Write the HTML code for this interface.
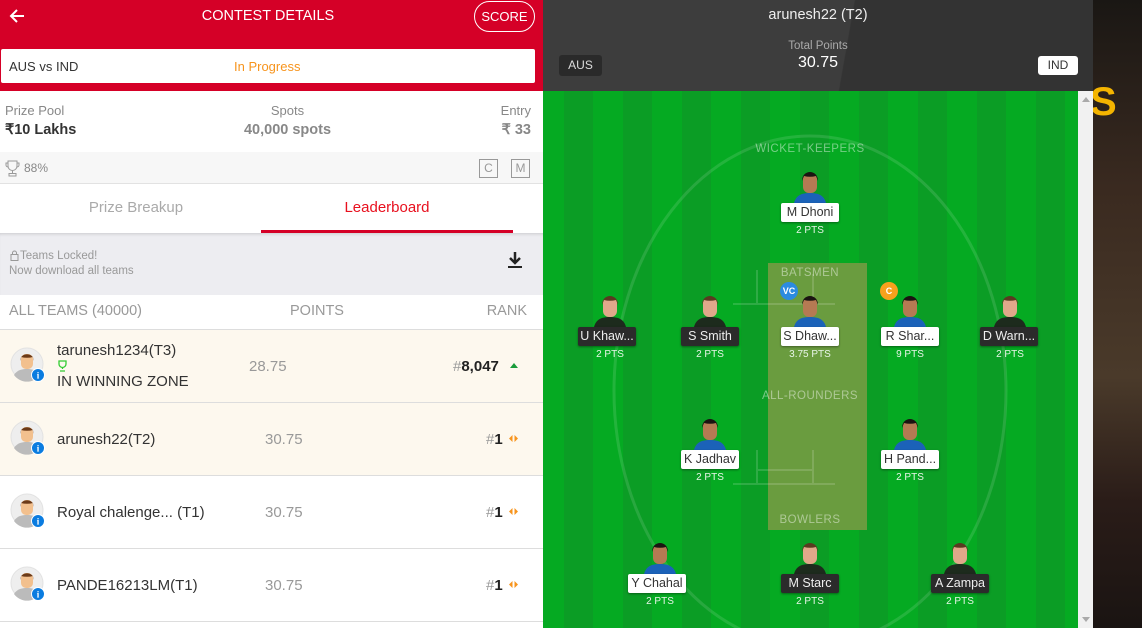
<!DOCTYPE html>
<html><head><meta charset="utf-8"><style>
*{margin:0;padding:0;box-sizing:border-box}
body{width:1142px;height:628px;overflow:hidden;font-family:"Liberation Sans",sans-serif;background:#1c1a17;position:relative}
.a{position:absolute}
#left{left:0;top:0;width:543px;height:628px;background:#fff}
.hdr{left:0;top:0;width:543px;height:91px;background:#d50027}
.t{white-space:nowrap}
.row{left:0;width:543px;height:73px;border-bottom:1px solid #ddd}
.lbl{position:absolute;height:19px;width:58px;font-size:12.5px;line-height:19px;text-align:center;border-radius:2px;box-shadow:0 1px 2px rgba(0,0,0,.4);overflow:hidden}
.w{background:#fff;color:#333}.d{background:#2b2b2b;color:#eee}
.pts{position:absolute;font-size:10px;color:#e8f5e8;width:60px;text-align:center}
.sec{position:absolute;font-size:11.5px;color:rgba(255,255,255,.45);letter-spacing:.5px;width:160px;text-align:center}
</style></head><body>
<div id="left" class="a">
<div class="a hdr"></div>
<svg class="a" style="left:8px;top:7px" width="18" height="18" viewBox="0 0 18 18"><path d="M16 9H3M9 3L3 9l6 6" stroke="#fff" stroke-width="2" fill="none"/></svg>
<div class="a t" style="left:0;width:536px;top:8px;text-align:center;color:#fff;font-size:14.5px">CONTEST DETAILS</div>
<div class="a" style="left:474px;top:1px;width:61px;height:31px;border:1px solid #fff;border-radius:16px;color:#fff;font-size:13px;text-align:center;line-height:29px">SCORE</div>
<div class="a" style="left:1px;top:49px;width:534px;height:34px;background:#fff;border-radius:2px"></div>
<div class="a t" style="left:9px;top:59px;font-size:13px;color:#333">AUS vs IND</div>
<div class="a t" style="left:234px;top:59px;font-size:13px;color:#f7941d">In Progress</div>
<div class="a t" style="left:5px;top:103px;font-size:13px;color:#888">Prize Pool</div>
<div class="a t" style="left:5px;top:122px;font-size:14.5px;color:#333;font-weight:bold">₹10 Lakhs</div>
<div class="a t" style="left:0;width:575px;text-align:center;top:103px;font-size:13px;color:#888">Spots</div>
<div class="a t" style="left:0;width:575px;text-align:center;top:122px;font-size:14.5px;color:#888;font-weight:bold">40,000 spots</div>
<div class="a t" style="right:12px;top:103px;font-size:13px;color:#888">Entry</div>
<div class="a t" style="right:12px;top:122px;font-size:14.5px;color:#888;font-weight:bold">₹ 33</div>
<div class="a" style="left:0;top:152px;width:543px;height:32px;background:#f7f7f7;border-bottom:1px solid #e2e2e2"></div>
<svg class="a" style="left:5px;top:160px" width="15" height="17" viewBox="0 0 15 17"><path d="M3 1h9v5a4.5 4.5 0 0 1-9 0zM3 3H1v2a2 2 0 0 0 2 2M12 3h2v2a2 2 0 0 1-2 2M7.5 10.5v3M4 16h7v-2.5H4z" stroke="#999" fill="none"/></svg>
<div class="a t" style="left:24px;top:161px;font-size:12px;color:#888">88%</div>
<div class="a" style="left:479px;top:159px;width:19px;height:19px;border:1px solid #999;color:#999;font-size:12px;text-align:center;line-height:17px">C</div>
<div class="a" style="left:511px;top:159px;width:19px;height:19px;border:1px solid #999;color:#999;font-size:12px;text-align:center;line-height:17px">M</div>
<div class="a t" style="left:0;width:272px;text-align:center;top:199px;font-size:15px;color:#aaa">Prize Breakup</div>
<div class="a t" style="left:261px;width:252px;text-align:center;top:199px;font-size:15px;color:#e8101e">Leaderboard</div>
<div class="a" style="left:261px;top:230px;width:252px;height:3px;background:#d50027"></div>
<div class="a" style="left:0;top:233px;width:543px;height:62px;background:#ededf1;box-shadow:inset 0 3px 3px -2px rgba(0,0,0,.15)"></div>
<svg class="a" style="left:10px;top:250px" width="9" height="11" viewBox="0 0 9 11"><rect x="1" y="4.5" width="7" height="6" fill="none" stroke="#999"/><path d="M2.5 4.5V3a2 2 0 0 1 4 0v1.5" fill="none" stroke="#999"/></svg>
<div class="a t" style="left:20px;top:250px;font-size:11.5px;color:#999">Teams Locked!</div>
<div class="a t" style="left:9px;top:265px;font-size:11.5px;color:#999">Now download all teams</div>
<svg class="a" style="left:507px;top:251px" width="16" height="18" viewBox="0 0 16 18"><path d="M8 1v10M3 7l5 5 5-5" stroke="#222" stroke-width="2.5" fill="none"/><path d="M1 16h14" stroke="#222" stroke-width="2"/></svg>
<div class="a t" style="left:9px;top:303px;font-size:14.5px;color:#999">ALL TEAMS (40000)</div>
<div class="a t" style="left:290px;top:303px;font-size:14.5px;color:#999">POINTS</div>
<div class="a t" style="right:16px;top:303px;font-size:14.5px;color:#999">RANK</div>
<div class="a" style="left:0;top:329px;width:543px;height:1px;background:#ddd"></div>

<div class="a row" style="top:330px;background:#fdf8ee"></div>
<div class="a row" style="top:403px;background:#fdf8ee"></div>
<div class="a row" style="top:476px;background:#fff"></div>
<div class="a row" style="top:549px;background:#fff"></div>

<svg width="0" height="0" style="position:absolute"><defs><g id="av"><circle cx="17" cy="17" r="16" fill="#eee" stroke="#e2e2e2"/><path d="M4 28c3-5 8-6 13-6s10 1 13 6a16 16 0 0 1-26 0z" fill="#bbb"/><rect x="11" y="7" width="12" height="15" rx="5" fill="#f2c08e"/><path d="M10 14c0-9 14-9 14 0l-1-4c-4 1-8 1-12 0z" fill="#6b3a18"/><circle cx="28" cy="28" r="6.5" fill="#0a7ce0" stroke="#fff"/><text x="28" y="31.5" font-size="9" fill="#fff" text-anchor="middle" font-weight="bold" font-family="Liberation Serif">i</text></g>
<g id="ar"><path d="M0 3.5L3.5 0v7zM5.5 0L9 3.5 5.5 7z" fill="#f7941d"/></g></defs></svg>
<svg class="a" style="left:10px;top:347px" width="36" height="36"><use href="#av"/></svg>
<svg class="a" style="left:10px;top:420px" width="36" height="36"><use href="#av"/></svg>
<svg class="a" style="left:10px;top:493px" width="36" height="36"><use href="#av"/></svg>
<svg class="a" style="left:10px;top:566px" width="36" height="36"><use href="#av"/></svg>

<div class="a t" style="left:57px;top:342px;font-size:15px;color:#333">tarunesh1234(T3)</div>
<svg class="a" style="left:57px;top:360px" width="11" height="12" viewBox="0 0 11 12"><path d="M2 1h7v3a3.5 3.5 0 0 1-7 0zM5.5 7v2M3 11h5" stroke="#3c3" fill="none" stroke-width="1.3"/></svg>
<div class="a t" style="left:57px;top:373px;font-size:15px;color:#333">IN WINNING ZONE</div>
<div class="a t" style="left:249px;top:358px;font-size:15px;color:#999">28.75</div>
<div class="a t" style="left:453px;top:358px;font-size:15px;color:#999">#<b style="color:#222">8,047</b></div>
<div class="a" style="left:510px;top:363px;border:4px solid transparent;border-bottom:5px solid #1a9c3a;border-top:0"></div>

<div class="a t" style="left:57px;top:431px;font-size:15px;color:#333">arunesh22(T2)</div>
<div class="a t" style="left:265px;top:431px;font-size:15px;color:#999">30.75</div>
<div class="a t" style="left:486px;top:431px;font-size:15px;color:#999">#<b style="color:#222">1</b></div>
<svg class="a" style="left:509px;top:435px" width="9" height="7"><use href="#ar"/></svg>

<div class="a t" style="left:57px;top:504px;font-size:15px;color:#333">Royal chalenge... (T1)</div>
<div class="a t" style="left:265px;top:504px;font-size:15px;color:#999">30.75</div>
<div class="a t" style="left:486px;top:504px;font-size:15px;color:#999">#<b style="color:#222">1</b></div>
<svg class="a" style="left:509px;top:508px" width="9" height="7"><use href="#ar"/></svg>

<div class="a t" style="left:57px;top:577px;font-size:15px;color:#333">PANDE16213LM(T1)</div>
<div class="a t" style="left:265px;top:577px;font-size:15px;color:#999">30.75</div>
<div class="a t" style="left:486px;top:577px;font-size:15px;color:#999">#<b style="color:#222">1</b></div>
<svg class="a" style="left:509px;top:581px" width="9" height="7"><use href="#ar"/></svg>
</div>

<div class="a" style="left:1093px;top:0;width:49px;height:628px;background:linear-gradient(180deg,#1a1714 0%,#3a2a20 30%,#4a3a2a 60%,#2a1c18 80%,#1a1412 100%)"></div>
<div class="a t" style="left:1090px;top:80px;font-size:40px;color:#f4b400;font-weight:bold">S</div>
<div class="a" style="left:543px;top:0;width:550px;height:91px;background:linear-gradient(100deg,#3d3d3d 0%,#3d3d3d 55%,#333 55.2%,#333 100%)"></div>
<div class="a t" style="left:543px;width:550px;text-align:center;top:7px;font-size:14.5px;color:#eee">arunesh22 (T2)</div>
<div class="a t" style="left:543px;width:550px;text-align:center;top:40px;font-size:11.5px;color:#aaa">Total Points</div>
<div class="a t" style="left:543px;width:550px;text-align:center;top:54px;font-size:16px;color:#fff">30.75</div>
<div class="a" style="left:559px;top:55px;width:43px;height:21px;background:#2a2a2a;border-radius:3px;color:#ddd;font-size:12px;text-align:center;line-height:21px">AUS</div>
<div class="a" style="left:1038px;top:56px;width:40px;height:19px;background:#fff;border-radius:3px;color:#333;font-size:12px;text-align:center;line-height:19px">IND</div>
<div class="a" style="left:543px;top:91px;width:535px;height:537px;background-color:#05aa22;background-image:linear-gradient(90deg,#0b9d25 0,#0b9d25 29px,#05aa22 29px,#05aa22 59px);background-size:59px 100%;background-position:21px 0"></div>
<div class="a" style="left:1078px;top:91px;width:15px;height:537px;background:#f1f1f1"></div>
<div class="a" style="left:1082px;top:97px;border:4px solid transparent;border-bottom:5px solid #aaa;border-top:0"></div>
<div class="a" style="left:1082px;top:617px;border:4px solid transparent;border-top:5px solid #aaa;border-bottom:0"></div>
<svg class="a" style="left:543px;top:91px" width="535" height="537"><ellipse cx="267" cy="300" rx="196" ry="255" fill="none" stroke="rgba(255,255,255,.12)" stroke-width="3"/></svg>
<div class="a" style="left:768px;top:263px;width:99px;height:267px;background:#6a9c3f"></div>
<svg class="a" style="left:733px;top:270px" width="175" height="250"><g stroke="rgba(255,255,255,.15)" stroke-width="2" fill="none"><path d="M0 34h102M24 34V0M80 34V4M0 214h102M24 214v-34M80 214v-34M24 200h56"/></g></svg>
<div class="sec" style="left:730px;top:143px">WICKET-KEEPERS</div>
<div class="sec" style="left:730px;top:267px">BATSMEN</div>
<div class="sec" style="left:730px;top:390px">ALL-ROUNDERS</div>
<div class="sec" style="left:730px;top:514px">BOWLERS</div>

<svg width="0" height="0" style="position:absolute"><defs><g id="pl"><path d="M2 36c2-8 8-10 16-10s14 2 16 10z" fill="#1b62b8"/><rect x="11" y="6" width="14" height="20" rx="6" fill="#b57a53"/><path d="M10 14c0-12 16-12 16 0l-2-5c-4 1-8 1-12 0z" fill="#1a1411"/></g><g id="pa"><path d="M2 36c2-8 8-10 16-10s14 2 16 10z" fill="#1d2b1d"/><rect x="11" y="6" width="14" height="20" rx="6" fill="#e0a88a"/><path d="M10 14c0-12 16-12 16 0l-2-5c-4 1-8 1-12 0z" fill="#5a3a20"/></g></defs></svg>
<svg class="a" style="left:792px;top:167px" width="36" height="36"><use href="#pl"/></svg>
<svg class="a" style="left:592px;top:291px" width="36" height="36"><use href="#pa"/></svg>
<svg class="a" style="left:692px;top:291px" width="36" height="36"><use href="#pa"/></svg>
<svg class="a" style="left:792px;top:291px" width="36" height="36"><use href="#pl"/></svg>
<svg class="a" style="left:892px;top:291px" width="36" height="36"><use href="#pl"/></svg>
<svg class="a" style="left:992px;top:291px" width="36" height="36"><use href="#pa"/></svg>
<svg class="a" style="left:692px;top:414px" width="36" height="36"><use href="#pl"/></svg>
<svg class="a" style="left:892px;top:414px" width="36" height="36"><use href="#pl"/></svg>
<svg class="a" style="left:642px;top:538px" width="36" height="36"><use href="#pl"/></svg>
<svg class="a" style="left:792px;top:538px" width="36" height="36"><use href="#pa"/></svg>
<svg class="a" style="left:942px;top:538px" width="36" height="36"><use href="#pa"/></svg>
<div class="a" style="left:780px;top:282px;width:18px;height:18px;border-radius:50%;background:#2b8be0;color:#fff;font-size:9px;font-weight:bold;text-align:center;line-height:18px">VC</div>
<div class="a" style="left:880px;top:282px;width:18px;height:18px;border-radius:50%;background:#f7a11d;color:#fff;font-size:9px;font-weight:bold;text-align:center;line-height:18px">C</div>

<div class="lbl w" style="left:781px;top:203px">M Dhoni</div><div class="pts" style="left:780px;top:225px">2 PTS</div>
<div class="lbl d" style="left:578px;top:327px">U Khaw...</div><div class="pts" style="left:580px;top:349px">2 PTS</div>
<div class="lbl d" style="left:681px;top:327px">S Smith</div><div class="pts" style="left:680px;top:349px">2 PTS</div>
<div class="lbl w" style="left:781px;top:327px">S Dhaw...</div><div class="pts" style="left:780px;top:349px">3.75 PTS</div>
<div class="lbl w" style="left:881px;top:327px">R Shar...</div><div class="pts" style="left:880px;top:349px">9 PTS</div>
<div class="lbl d" style="left:980px;top:327px">D Warn...</div><div class="pts" style="left:980px;top:349px">2 PTS</div>
<div class="lbl w" style="left:681px;top:450px">K Jadhav</div><div class="pts" style="left:680px;top:472px">2 PTS</div>
<div class="lbl w" style="left:881px;top:450px">H Pand...</div><div class="pts" style="left:880px;top:472px">2 PTS</div>
<div class="lbl w" style="left:628px;top:574px">Y Chahal</div><div class="pts" style="left:630px;top:596px">2 PTS</div>
<div class="lbl d" style="left:781px;top:574px">M Starc</div><div class="pts" style="left:780px;top:596px">2 PTS</div>
<div class="lbl d" style="left:931px;top:574px">A Zampa</div><div class="pts" style="left:930px;top:596px">2 PTS</div>
</body></html>
